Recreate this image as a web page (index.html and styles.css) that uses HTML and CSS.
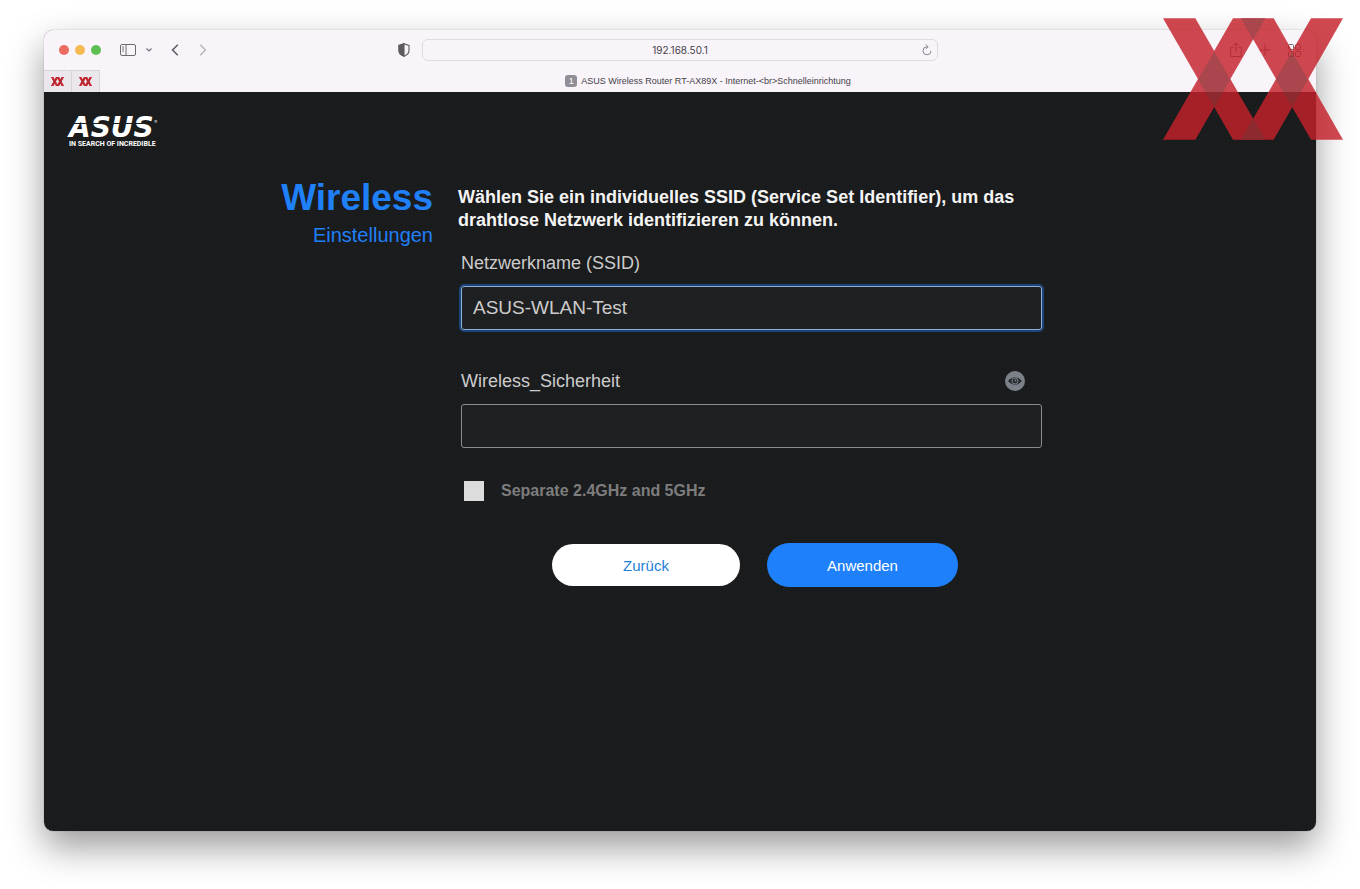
FILE: index.html
```
<!DOCTYPE html>
<html lang="de">
<head>
    <meta charset="UTF-8">
    <meta name="viewport" content="width=device-width, initial-scale=1.0">
    <title>ASUS Wireless Router RT-AX89X</title>
    <link rel="stylesheet" href="styles.css">
</head>
<body>

<svg class="defs" aria-hidden="true">
    <symbol id="xx" viewBox="38 23 540 365">
        <g opacity="0.82" fill="#c5212a">
            <polygon points="38,23 135,23 345,388 248,388" />
            <polygon points="248,23 345,23 135,388 38,388" />
            <polygon points="272,23 370,23 578,388 482,388" />
            <polygon points="482,23 578,23 370,388 272,388" />
        </g>
        <g fill="#3c4a4b" opacity="0.24">
            <polygon points="192,123 240,207 192,290 143,207" />
            <polygon points="425,123 473,207 425,290 376,207" />
            <polygon points="272,23 345,23 308,88" />
            <polygon points="272,388 345,388 308,322" />
        </g>
    </symbol>
</svg>

<div class="window">
    <header class="toolbar">
        <div class="toolbar-left">
            <span class="lights">
                <span class="light red"></span>
                <span class="light yellow"></span>
                <span class="light green"></span>
            </span>
            <button class="icon-button sidebar-button" aria-label="Seitenleiste">
                <svg width="16" height="12" viewBox="0 0 16 12" fill="none" stroke="#6e6a70">
                    <rect x="0.5" y="0.5" width="15" height="11" rx="1.5" />
                    <path d="M6 0.5V11.5M2.2 3H4M2.2 5H4M2.2 7H4" />
                </svg>
            </button>
            <button class="icon-button chevron-button" aria-label="Tabgruppen">
                <svg width="6" height="4" viewBox="0 0 6 4" fill="none" stroke="#77737a" stroke-width="1.2">
                    <path d="M0.5 0.5L3 3L5.5 0.5" />
                </svg>
            </button>
            <button class="icon-button back-button" aria-label="Zurück">
                <svg width="8" height="12" viewBox="0 0 8 12" fill="none" stroke="#5f5b61" stroke-width="1.5">
                    <path d="M6.8 0.8L1.5 6L6.8 11.2" />
                </svg>
            </button>
            <button class="icon-button" aria-label="Vorwärts">
                <svg width="8" height="12" viewBox="0 0 8 12" fill="none" stroke="#b6b2b8" stroke-width="1.4">
                    <path d="M1.2 0.8L6.5 6L1.2 11.2" />
                </svg>
            </button>
        </div>
        <div class="toolbar-center">
            <button class="icon-button" aria-label="Datenschutzbericht">
                <svg width="12" height="14" viewBox="0 0 12 14" fill="none" stroke="#5e5a60" stroke-width="1.1">
                    <path d="M6 0.8L11 2.5V7.5C11 10.2 8.7 12.2 6 13.2C3.3 12.2 1 10.2 1 7.5V2.5Z" />
                    <path d="M6 0.8V13.2C3.3 12.2 1 10.2 1 7.5V2.5Z" fill="#5e5a60" />
                </svg>
            </button>
            <div class="address">
                <input class="address-input" type="text" value="192.168.50.1" aria-label="Adresse">
                <button class="icon-button" aria-label="Neu laden">
                    <svg width="10" height="12" viewBox="0 0 10 12" fill="none" stroke="#89858b">
                        <path d="M5 2.8A4 4 0 1 0 9 6.8M3.8 0.6L6.2 2.8L3.8 5" />
                    </svg>
                </button>
            </div>
        </div>
        <div class="toolbar-right">
            <button class="icon-button" aria-label="Teilen">
                <svg width="12" height="16" viewBox="0 0 12 16" fill="none" stroke="#6e6a70">
                    <path d="M3.5 5.5H0.8V14.5H11.2V5.5H8.5M6 10V1M3.2 3.6L6 0.8L8.8 3.6" />
                </svg>
            </button>
            <button class="icon-button" aria-label="Neuer Tab">
                <svg width="12" height="12" viewBox="0 0 12 12" fill="none" stroke="#6e6a70">
                    <path d="M6 0.5V11.5M0.5 6H11.5" />
                </svg>
            </button>
            <button class="icon-button" aria-label="Tabübersicht">
                <svg width="13" height="13" viewBox="0 0 13 13" fill="none" stroke="#6e6a70">
                    <rect x="0.5" y="0.5" width="5" height="5" rx="1" />
                    <rect x="7.5" y="0.5" width="5" height="5" rx="1" />
                    <rect x="0.5" y="7.5" width="5" height="5" rx="1" />
                    <rect x="7.5" y="7.5" width="5" height="5" rx="1" />
                </svg>
            </button>
        </div>
    </header>

    <nav class="tabs">
        <a class="pinned" href="#" aria-label="Angehefteter Tab 1"><svg width="13" height="9"><use href="#xx" /><use href="#xx" /></svg></a>
        <a class="pinned" href="#" aria-label="Angehefteter Tab 2"><svg width="13" height="9"><use href="#xx" /><use href="#xx" /></svg></a>
        <a class="tab" href="#"><span class="tab-icon">1</span>ASUS Wireless Router RT-AX89X - Internet-&lt;br&gt;Schnelleinrichtung</a>
    </nav>

    <main class="page">
        <div class="logo">
            <div class="logo-name">ASUS<span class="logo-mark">®</span></div>
            <div class="logo-claim">IN SEARCH OF INCREDIBLE</div>
        </div>

        <div class="setup">
            <div class="setup-title">
                <h1>Wireless</h1>
                <h2>Einstellungen</h2>
            </div>
            <form class="setup-form">
                <p class="intro">Wählen Sie ein individuelles SSID (Service Set Identifier), um das drahtlose Netzwerk identifizieren zu können.</p>
                <div class="field">
                    <div class="field-head">
                        <label for="ssid">Netzwerkname (SSID)</label>
                    </div>
                    <input class="text-input focused" id="ssid" type="text" value="ASUS-WLAN-Test">
                </div>
                <div class="field">
                    <div class="field-head">
                        <label for="security">Wireless_Sicherheit</label>
                        <button class="icon-button" type="button" aria-label="Passwort anzeigen">
                            <svg width="20" height="20" viewBox="0 0 20 20">
                                <circle cx="10" cy="10" r="10" fill="#7c8088" />
                                <path d="M3 10Q10 2.5 17 10Q10 17.5 3 10Z" fill="#25282d" />
                                <circle cx="10" cy="10" r="3" fill="#25282d" stroke="#7c8088" />
                                <circle cx="10.5" cy="9.5" r="1" fill="#7c8088" />
                            </svg>
                        </button>
                    </div>
                    <input class="text-input" id="security" type="password">
                </div>
                <div class="check">
                    <input class="check-box" id="separate" type="checkbox">
                    <label for="separate">Separate 2.4GHz and 5GHz</label>
                </div>
                <div class="buttons">
                    <button class="button" type="button">Zurück</button>
                    <button class="button primary" type="button">Anwenden</button>
                </div>
            </form>
        </div>
    </main>
</div>

<svg class="watermark" aria-hidden="true"><use href="#xx" /></svg>

</body>
</html>
```
FILE: styles.css
```
* {
    box-sizing: border-box;
}

body {
    margin: 0;
    min-height: 100vh;
    padding: 30px 44px 58px;
    display: flex;
    background-color: #fff;
    font-family: "Liberation Sans", Arial, sans-serif;
    position: relative;
}

.defs {
    position: absolute;
    width: 0;
    height: 0;
}

.window {
    flex: 1;
    display: flex;
    flex-direction: column;
    border-radius: 9px;
    overflow: hidden;
    background-color: #f8f4fa;
    box-shadow: 0 0 1px rgba(0, 0, 0, 0.5), 0 16px 36px rgba(0, 0, 0, 0.4);
}

.icon-button {
    display: flex;
    padding: 0;
    border: none;
    background: none;
}

/* browser toolbar */
.toolbar {
    height: 40px;
    padding: 0 15px;
    display: grid;
    grid-template-columns: 1fr minmax(0, 564px) 1fr;
    align-items: center;
    font-family: Inter, sans-serif;
}

.toolbar-left {
    display: flex;
    align-items: center;
}

.lights {
    display: flex;
    gap: 6px;
    margin-right: 19px;
}

.light {
    width: 10px;
    height: 10px;
    border-radius: 50%;
}

.red {
    background-color: #ec6a5f;
}

.yellow {
    background-color: #f4b950;
}

.green {
    background-color: #5dbf51;
}

.sidebar-button {
    margin-right: 10px;
}

.chevron-button {
    margin-right: 19px;
}

.back-button {
    margin-right: 20px;
}

.toolbar-center {
    display: flex;
    align-items: center;
    gap: 12px;
    padding-right: 24px;
}

.address {
    flex: 1;
    display: flex;
    align-items: center;
    height: 22px;
    padding-right: 5px;
    border: 1px solid #dfdbe1;
    border-radius: 6px;
}

.address-input {
    flex: 1;
    min-width: 0;
    padding: 0 0 0 15px;
    border: none;
    outline: none;
    background: none;
    color: #454147;
    font-family: inherit;
    font-size: 10px;
    text-align: center;
}

.toolbar-right {
    display: flex;
    align-items: center;
    justify-content: flex-end;
    gap: 17px;
}

.tabs {
    height: 22px;
    display: flex;
}

.pinned {
    width: 28px;
    display: flex;
    align-items: center;
    justify-content: center;
    background-color: #ebe7ed;
    border-top: 1px solid #d8d4da;
    border-right: 1px solid #d8d4da;
}

.tab {
    flex: 1;
    display: flex;
    align-items: center;
    justify-content: center;
    gap: 4px;
    color: #454147;
    font-size: 9px;
    text-decoration: none;
}

.tab-icon {
    width: 12px;
    height: 12px;
    border-radius: 3px;
    background-color: #918e97;
    color: #fff;
    line-height: 12px;
    text-align: center;
}

/* router page */
.page {
    flex: 1;
    padding: 26px 25px 24px;
    background-color: #1b1c1d;
    background-image: radial-gradient(#191a1b 1px, transparent 1px);
    background-size: 4px 4px;
}

.logo {
    height: 34px;
    color: #fff;
    white-space: nowrap;
}

.logo-name {
    display: flex;
    position: relative;
    font-family: "DejaVu Sans", sans-serif;
    font-size: 28px;
    font-weight: bold;
    font-style: oblique;
    line-height: 20px;
}

/* thin cut through the letters */
.logo-name::after {
    content: "";
    position: absolute;
    top: 5px;
    left: 0;
    width: 88px;
    height: 1px;
    background-color: #1b1c1d;
}

.logo-mark {
    font-size: 4px;
    font-weight: normal;
    line-height: 8px;
}

.logo-claim {
    font-family: Roboto, sans-serif;
    font-size: 7px;
    font-weight: bold;
    line-height: 12px;
}

.setup {
    max-width: 800px;
    margin: 26px auto 0;
    display: grid;
    grid-template-columns: 153px minmax(0, 584px);
    gap: 25px;
}

.setup-title {
    color: #1f80f8;
    text-align: right;
}

h1 {
    margin: 0;
    font-size: 37px;
    line-height: 40px;
}

h2 {
    margin: 5px 0 0;
    font-size: 20px;
    font-weight: normal;
    line-height: 24px;
}

.intro {
    margin: 8px 0 18px;
    color: #f4f4f4;
    font-size: 18px;
    font-weight: bold;
    line-height: 23px;
}

.field {
    margin: 0 0 38px 3px;
    color: #ccc;
    font-size: 18px;
}

.field-head {
    height: 26px;
    margin-bottom: 10px;
    padding-right: 17px;
    display: flex;
    align-items: center;
    justify-content: space-between;
}

.text-input {
    width: 100%;
    height: 44px;
    padding: 0 11px;
    display: block;
    border: 1px solid #8c8c8c;
    border-radius: 3px;
    outline: none;
    background-color: rgba(255, 255, 255, 0.02);
    color: #ccc;
    font-family: inherit;
    font-size: 19px;
}

.focused {
    border-color: #8fb0dc;
    box-shadow: 0 0 0 2px #1d4577;
}

.check {
    margin: -5px 0 0 6px;
    display: flex;
    align-items: center;
    gap: 17px;
    color: #7d7d7d;
    font-size: 16px;
    font-weight: bold;
    line-height: 20px;
}

.check-box {
    appearance: none;
    width: 20px;
    height: 20px;
    margin: 0;
    background-color: #dcdcdc;
}

.buttons {
    margin: 42px 0 0 94px;
    display: flex;
    align-items: center;
    gap: 27px;
}

.button {
    width: 188px;
    height: 42px;
    border: none;
    border-radius: 22px;
    background-color: #fff;
    color: #2380d8;
    font-family: inherit;
    font-size: 15px;
}

.button.primary {
    width: 191px;
    height: 44px;
    background-color: #1e80fa;
    color: #fff;
}

/* site mark lying over the window corner */
.watermark {
    position: absolute;
    top: 18px;
    right: 17px;
    width: 180px;
    height: 122px;
    pointer-events: none;
}
```
